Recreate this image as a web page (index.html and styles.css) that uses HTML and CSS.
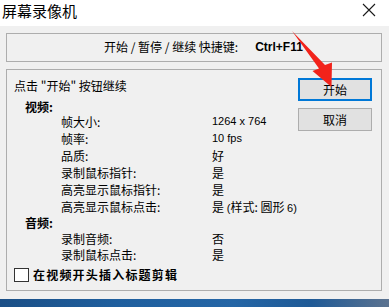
FILE: index.html
```html
<!DOCTYPE html>
<html lang="zh-CN">
  <head>
    <meta charset="UTF-8" />
    <title>屏幕录像机</title>
    <link rel="stylesheet" href="styles.css">
  </head>
  <body>
    <div class="window">
      <div class="titlebar">
        <span class="title">屏幕录像机</span>
        <svg class="close" width="14" height="14" viewBox="0 0 14 14">
          <path d="M1 1 L13 13 M13 1 L1 13" stroke="#1a1a1a" stroke-width="1.1" fill="none" />
        </svg>
      </div>

      <div class="content">
        <div class="shortcut">
          <span>开始 / 暂停 / 继续 快捷键:</span>
          <b class="keys">Ctrl+F11</b>
        </div>

        <div class="group">
          <div class="info">
            <div class="hint">点击 "开始" 按钮继续</div>

            <div class="section video">视频:</div>
            <div class="rows">
              <span>帧大小:</span><span class="lat">1264 x 764</span>
              <span>帧率:</span><span class="lat">10 fps</span>
              <span>品质:</span><span>好</span>
              <span>录制鼠标指针:</span><span>是</span>
              <span>高亮显示鼠标指针:</span><span>是</span>
              <span>高亮显示鼠标点击:</span><span>是 <span class="lat">(</span>样式: 圆形 <span class="lat">6)</span></span>
            </div>

            <div class="section audio">音频:</div>
            <div class="rows small">
              <span>录制音频:</span><span>否</span>
              <span>录制鼠标点击:</span><span>是</span>
            </div>

            <label class="check">
              <span class="box"></span>
              <span class="check-text">在视频开头插入标题剪辑</span>
            </label>
          </div>

          <div class="buttons">
            <button class="btn default">开始</button>
            <button class="btn">取消</button>
          </div>
        </div>
      </div>
    </div>
    <div class="desktop"></div>

    <!-- red pointer arrow drawn over the dialog -->
    <svg class="arrow" width="389" height="307" viewBox="0 0 389 307">
      <polygon points="292,31 325,65 332,62.5 331.5,87 312.5,71 319,68.5" fill="#f2231b" />
    </svg>
  </body>
</html>
```

FILE: styles.css
```css
* {
  margin: 0;
  padding: 0;
  box-sizing: border-box;
}

body {
  width: 389px;
  height: 307px;
  overflow: hidden;
  position: relative;
  font-family: "Noto Sans CJK SC", "Liberation Sans", sans-serif;
  font-size: 12px;
  color: #000;
  background: #f0f0f0;
}

.window {
  height: 299px;
  display: flex;
  flex-direction: column;
  background: #f0f0f0;
}

.titlebar {
  height: 26px;
  background: #ffffff;
  display: flex;
  justify-content: space-between;
  align-items: flex-start;
}

.title {
  font-size: 15px;
  line-height: 22px;
  padding-left: 2px;
  color: #000;
}

.close {
  margin: 3px 13px 0 0;
}

.content {
  padding: 7px 7px 0 6px;
}

.shortcut {
  height: 29px;
  border: 1px solid #adadad;
  display: flex;
  align-items: center;
  padding: 0 0 1px 97px;
  line-height: 16px;
}

.keys {
  font-family: "Liberation Sans", sans-serif;
  font-weight: 700;
  margin-left: 17px;
}

.group {
  margin-top: 7px;
  height: 222px;
  border: 1px solid #adadad;
  display: grid;
  grid-template-columns: 1fr auto;
}

.info {
  padding: 8px 0 0 7px;
}

.hint {
  height: 16px;
  line-height: 16px;
}

.section {
  font-weight: 700;
  margin-left: 11px;
}

.video {
  margin-top: 7px;
  height: 12px;
  line-height: 12px;
}

.audio {
  height: 16px;
  line-height: 16px;
}

.rows {
  display: grid;
  grid-template-columns: 151px auto;
  grid-auto-rows: 17px;
  line-height: 17px;
  padding-left: 47px;
}

.rows.small {
  grid-auto-rows: 16px;
  line-height: 16px;
}

.lat {
  font-family: "Liberation Sans", sans-serif;
  font-size: 11px;
}

.check {
  display: flex;
  align-items: center;
  gap: 4px;
  margin-top: 4px;
  height: 15px;
}

.box {
  width: 15px;
  height: 14px;
  background: #ffffff;
  border: 1px solid #333333;
}

.check-text {
  font-weight: 700;
  letter-spacing: 1.2px;
}

.buttons {
  padding: 8px 9px 0 0;
  display: flex;
  flex-direction: column;
  gap: 7px;
}

.btn {
  width: 74px;
  height: 23px;
  background: #e1e1e1;
  border: 1px solid #adadad;
  font-family: inherit;
  font-size: 12px;
  color: #000;
}

.btn.default {
  border: 2px solid #0078d7;
}

.desktop {
  height: 8px;
  background: linear-gradient(90deg, #1b4f86 0%, #1f5f9e 30%, #2566a6 60%, #1f5a96 80%, #5c7390 100%);
}

.arrow {
  position: absolute;
  top: 0;
  left: 0;
  pointer-events: none;
}
```
